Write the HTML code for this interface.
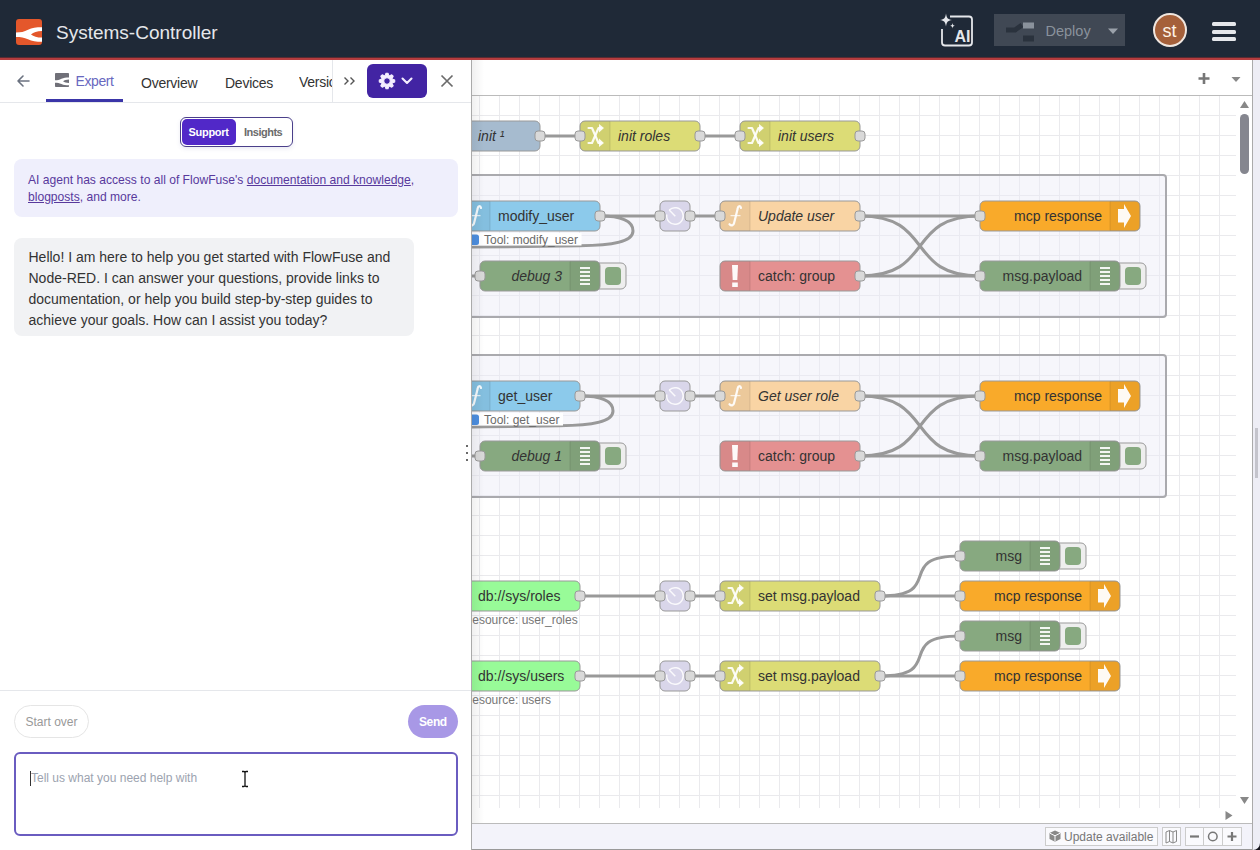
<!DOCTYPE html>
<html><head><meta charset="utf-8">
<style>
*{box-sizing:border-box;margin:0;padding:0}
html,body{width:1260px;height:850px;overflow:hidden;background:#fff;font-family:"Liberation Sans",sans-serif}
.abs{position:absolute}
#hdr{position:absolute;left:0;top:0;width:1260px;height:57px;background:#1f2937}
#redline{position:absolute;left:0;top:57px;width:1260px;height:3px;background:linear-gradient(to bottom,#5a2a31 0,#5a2a31 1px,#b53c3e 1px,#b53c3e 3px)}
#title{position:absolute;left:56px;top:22px;font-size:19px;line-height:22px;color:#e5e7eb;white-space:nowrap}
#panel{position:absolute;left:0;top:60px;width:472px;height:790px;background:#fff;border-right:1px solid #aaa}
#rstrip{position:absolute;left:1252px;top:60px;width:8px;height:790px;background:#ededf5;border-left:1px solid #aaa}
.tab{position:absolute;top:74.5px;font-size:14px;line-height:16px;color:#333;white-space:nowrap;letter-spacing:-0.25px}
.txt{position:absolute;white-space:nowrap}
</style></head>
<body>
<div id="hdr"></div>
<div id="redline"></div>
<!-- logo -->
<svg class="abs" style="left:16px;top:19px" width="26" height="26" viewBox="0 0 26 26">
  <rect x="0" y="0" width="26" height="26" rx="3" fill="#e4572b"/>
  <path d="M0 13.5 C5 13.5 8 13 12 10.8 C16 8.7 20 8.2 26 8.2 L26 12.1 C21 12.1 17.5 13.5 15 15.4 C17.5 17.3 21 18.6 26 18.6 L26 22.8 C20 22.8 16 22.3 12 20.3 C8 18.3 5 17.9 0 17.9 Z" fill="#fff"/>
</svg>
<div id="title">Systems-Controller</div>

<!-- AI icon -->
<svg class="abs" style="left:936px;top:10px" width="40" height="40" viewBox="0 0 40 40">
  <path d="M14 6.5 H33 A3 3 0 0 1 36 9.5 V32.5 A3 3 0 0 1 33 35.5 H9 A3 3 0 0 1 6 32.5 V19" fill="none" stroke="#e5e7eb" stroke-width="1.8"/>
  <path d="M10 3.5 C10.7 8 11.5 9.2 16 10 C11.5 10.8 10.7 12 10 16.5 C9.3 12 8.5 10.8 4 10 C8.5 9.2 9.3 8 10 3.5 Z" fill="#e5e7eb"/>
  <path d="M16.5 13 C16.8 15 17.3 15.5 19 15.8 C17.3 16.1 16.8 16.6 16.5 18.6 C16.2 16.6 15.7 16.1 14 15.8 C15.7 15.5 16.2 15 16.5 13 Z" fill="#e5e7eb"/>
  <text x="18.5" y="32.3" font-family="Liberation Sans" font-weight="bold" font-size="16" fill="#e5e7eb">AI</text>
</svg>

<!-- Deploy button -->
<div class="abs" style="left:994px;top:14px;width:131px;height:32px;background:#404854"></div>
<svg class="abs" style="left:1004px;top:20px" width="32" height="22" viewBox="0 0 32 22">
  <path d="M2 10 L11 10 L18 5" fill="none" stroke="#2a323d" stroke-width="5"/>
  <rect x="19" y="2.5" width="11" height="6" fill="#8a929c"/>
  <rect x="19" y="15.5" width="11" height="6" fill="#2a323d"/>
</svg>
<div class="txt" style="left:1045.5px;top:23px;font-size:14.5px;line-height:16px;color:#8a929c">Deploy</div>
<svg class="abs" style="left:1107px;top:27px" width="12" height="8" viewBox="0 0 12 8"><path d="M1 1.5 L11 1.5 L6 7 Z" fill="#9aa1aa"/></svg>

<!-- avatar -->
<div class="abs" style="left:1153px;top:13px;width:34px;height:34px;border-radius:50%;background:#a5603a;border:2px solid #f0e6df"></div>
<div class="txt" style="left:1162.5px;top:21.5px;font-size:18px;line-height:18px;color:#fff4e8">st</div>
<!-- hamburger -->
<div class="abs" style="left:1212px;top:22px;width:24px;height:4px;border-radius:1.5px;background:#e5e7eb"></div>
<div class="abs" style="left:1212px;top:30px;width:24px;height:4px;border-radius:1.5px;background:#e5e7eb"></div>
<div class="abs" style="left:1212px;top:37px;width:24px;height:4px;border-radius:1.5px;background:#e5e7eb"></div>

<div id="panel"></div>
<!-- panel tab bar -->
<svg class="abs" style="left:15px;top:73px" width="16" height="16" viewBox="0 0 16 16"><path d="M14 8 H3 M8 3 L3 8 L8 13" fill="none" stroke="#6b7280" stroke-width="1.6" stroke-linecap="round" stroke-linejoin="round"/></svg>
<svg class="abs" style="left:55px;top:73px" width="14" height="14" viewBox="0 0 26 26">
  <rect x="0" y="0" width="26" height="26" rx="1.5" fill="#707078"/>
  <path d="M0 13.5 C5 13.5 8 13 12 10.8 C16 8.7 20 8.2 26 8.2 L26 12.1 C21 12.1 17.5 13.5 15 15.4 C17.5 17.3 21 18.6 26 18.6 L26 22.8 C20 22.8 16 22.3 12 20.3 C8 18.3 5 17.9 0 17.9 Z" fill="#fff"/>
</svg>
<div class="tab" style="left:75.5px;top:72.5px;color:#6868c0;letter-spacing:-0.4px">Expert</div>
<div class="abs" style="left:46px;top:99px;width:77px;height:3px;background:#3a35a8"></div>
<div class="tab" style="left:141px">Overview</div>
<div class="tab" style="left:225px">Devices</div>
<div class="abs" style="left:299px;top:60px;width:33px;height:42px;overflow:hidden"><div class="tab" style="left:0;top:14px">Versions</div></div>
<div class="abs" style="left:332px;top:60px;width:1px;height:42px;background:#e5e7eb"></div>
<div class="abs" style="left:0;top:102px;width:471px;height:1px;background:#e5e7eb"></div>
<svg class="abs" style="left:343px;top:76px" width="14" height="10" viewBox="0 0 14 10"><path d="M1.5 1.5 L5 5 L1.5 8.5 M7.5 1.5 L11 5 L7.5 8.5" fill="none" stroke="#555" stroke-width="1.4"/></svg>
<div class="abs" style="left:367px;top:64px;width:60px;height:34px;border-radius:6px;background:#4224a3"></div>
<svg class="abs" style="left:377.5px;top:72px" width="18" height="18" viewBox="0 0 24 24"><path fill="#f5eeff" fill-rule="evenodd" stroke="#f5eeff" stroke-width="1.4" stroke-linejoin="round" d="M9.46 5.26 L10.65 1.69 L13.35 1.69 L14.54 5.26 L14.97 5.44 L18.34 3.75 L20.25 5.66 L18.56 9.03 L18.74 9.46 L22.31 10.65 L22.31 13.35 L18.74 14.54 L18.56 14.97 L20.25 18.34 L18.34 20.25 L14.97 18.56 L14.54 18.74 L13.35 22.31 L10.65 22.31 L9.46 18.74 L9.03 18.56 L5.66 20.25 L3.75 18.34 L5.44 14.97 L5.26 14.54 L1.69 13.35 L1.69 10.65 L5.26 9.46 L5.44 9.03 L3.75 5.66 L5.66 3.75 L9.03 5.44 Z M16.3 12 A4.3 4.3 0 1 0 7.7 12 A4.3 4.3 0 1 0 16.3 12 Z"/></svg>
<svg class="abs" style="left:401px;top:76px" width="12" height="10" viewBox="0 0 12 10"><path d="M1.5 2.5 L6 7 L10.5 2.5" fill="none" stroke="#f5eeff" stroke-width="2.1" stroke-linecap="round" stroke-linejoin="round"/></svg>
<svg class="abs" style="left:440px;top:74px" width="14" height="14" viewBox="0 0 14 14"><path d="M1.5 1.5 L12.5 12.5 M12.5 1.5 L1.5 12.5" fill="none" stroke="#6b6b6b" stroke-width="1.7"/></svg>

<!-- toggle -->
<div class="abs" style="left:180px;top:117px;width:113px;height:30px;border:1.5px solid #4a3f8a;border-radius:6px;background:#fff;box-shadow:0 2px 4px rgba(80,80,160,0.12)"></div>
<div class="abs" style="left:181.5px;top:119px;width:54.5px;height:26px;border-radius:5px;background:#5128c8"></div>
<div class="txt" style="left:188.5px;top:126px;font-size:11px;line-height:13px;font-weight:bold;color:#fff;letter-spacing:-0.3px">Support</div>
<div class="txt" style="left:244px;top:126px;font-size:11px;line-height:13px;font-weight:bold;color:#6b6b6b;letter-spacing:-0.5px">Insights</div>

<!-- info box -->
<div class="abs" style="left:14px;top:159px;width:444px;height:58px;border-radius:8px;background:#efeffc"></div>
<div class="txt" style="left:28px;top:171.8px;font-size:12.1px;line-height:17.6px;color:#58399c;white-space:normal;width:430px">AI agent has access to all of FlowFuse's <u>documentation and knowledge</u>,<br><u>blogposts</u>, and more.</div>

<!-- chat bubble -->
<div class="abs" style="left:14px;top:238px;width:400px;height:98px;border-radius:8px;background:#f1f2f4"></div>
<div class="txt" style="left:28.5px;top:247.2px;font-size:14px;line-height:20.8px;color:#333;white-space:normal;width:380px">Hello! I am here to help you get started with FlowFuse and<br>Node-RED. I can answer your questions, provide links to<br>documentation, or help you build step-by-step guides to<br>achieve your goals. How can I assist you today?</div>

<!-- footer -->
<div class="abs" style="left:0;top:690px;width:471px;height:1px;background:#e5e7eb"></div>
<div class="abs" style="left:14px;top:705px;width:75px;height:33px;border-radius:17px;border:1px solid #e5e5e5;background:#fff"></div>
<div class="txt" style="left:25.5px;top:715px;font-size:12px;line-height:14px;color:#999">Start over</div>
<div class="abs" style="left:408px;top:705px;width:50px;height:33px;border-radius:17px;background:#a898e6"></div>
<div class="txt" style="left:419px;top:715px;font-size:12px;line-height:14px;color:#fff;font-weight:bold;letter-spacing:-0.4px">Send</div>
<div class="abs" style="left:14px;top:752px;width:444px;height:84px;border-radius:6px;border:2px solid #6a5cc0;background:#fff"></div>
<div class="txt" style="left:31px;top:771px;font-size:12px;line-height:14px;color:#9ca3af">Tell us what you need help with</div>
<div class="abs" style="left:30px;top:771px;width:1px;height:15px;background:#333"></div>
<svg class="abs" style="left:240px;top:770px" width="10" height="18" viewBox="0 0 10 18"><path d="M2 1.5 H4 Q5 1.5 5 3 V15 Q5 16.5 4 16.5 H2 M8 1.5 H6 Q5 1.5 5 3 M8 16.5 H6 Q5 16.5 5 15" fill="none" stroke="#111" stroke-width="1.3"/></svg>


<svg id="ws" width="780" height="790" viewBox="0 0 780 790" style="position:absolute;left:472px;top:60px" font-family="Liberation Sans">
<rect x="0" y="0" width="780" height="790" fill="#fff"/>
<g stroke="#eaeaed" stroke-width="1"><line x1="7.5" y1="36" x2="7.5" y2="748" /><line x1="27.5" y1="36" x2="27.5" y2="748" /><line x1="47.5" y1="36" x2="47.5" y2="748" /><line x1="67.5" y1="36" x2="67.5" y2="748" /><line x1="87.5" y1="36" x2="87.5" y2="748" /><line x1="107.5" y1="36" x2="107.5" y2="748" /><line x1="127.5" y1="36" x2="127.5" y2="748" /><line x1="147.5" y1="36" x2="147.5" y2="748" /><line x1="167.5" y1="36" x2="167.5" y2="748" /><line x1="187.5" y1="36" x2="187.5" y2="748" /><line x1="207.5" y1="36" x2="207.5" y2="748" /><line x1="227.5" y1="36" x2="227.5" y2="748" /><line x1="247.5" y1="36" x2="247.5" y2="748" /><line x1="267.5" y1="36" x2="267.5" y2="748" /><line x1="287.5" y1="36" x2="287.5" y2="748" /><line x1="307.5" y1="36" x2="307.5" y2="748" /><line x1="327.5" y1="36" x2="327.5" y2="748" /><line x1="347.5" y1="36" x2="347.5" y2="748" /><line x1="367.5" y1="36" x2="367.5" y2="748" /><line x1="387.5" y1="36" x2="387.5" y2="748" /><line x1="407.5" y1="36" x2="407.5" y2="748" /><line x1="427.5" y1="36" x2="427.5" y2="748" /><line x1="447.5" y1="36" x2="447.5" y2="748" /><line x1="467.5" y1="36" x2="467.5" y2="748" /><line x1="487.5" y1="36" x2="487.5" y2="748" /><line x1="507.5" y1="36" x2="507.5" y2="748" /><line x1="527.5" y1="36" x2="527.5" y2="748" /><line x1="547.5" y1="36" x2="547.5" y2="748" /><line x1="567.5" y1="36" x2="567.5" y2="748" /><line x1="587.5" y1="36" x2="587.5" y2="748" /><line x1="607.5" y1="36" x2="607.5" y2="748" /><line x1="627.5" y1="36" x2="627.5" y2="748" /><line x1="647.5" y1="36" x2="647.5" y2="748" /><line x1="667.5" y1="36" x2="667.5" y2="748" /><line x1="687.5" y1="36" x2="687.5" y2="748" /><line x1="707.5" y1="36" x2="707.5" y2="748" /><line x1="727.5" y1="36" x2="727.5" y2="748" /><line x1="747.5" y1="36" x2="747.5" y2="748" /><line x1="0" y1="55.5" x2="764" y2="55.5" /><line x1="0" y1="75.5" x2="764" y2="75.5" /><line x1="0" y1="95.5" x2="764" y2="95.5" /><line x1="0" y1="115.5" x2="764" y2="115.5" /><line x1="0" y1="135.5" x2="764" y2="135.5" /><line x1="0" y1="155.5" x2="764" y2="155.5" /><line x1="0" y1="175.5" x2="764" y2="175.5" /><line x1="0" y1="195.5" x2="764" y2="195.5" /><line x1="0" y1="215.5" x2="764" y2="215.5" /><line x1="0" y1="235.5" x2="764" y2="235.5" /><line x1="0" y1="255.5" x2="764" y2="255.5" /><line x1="0" y1="275.5" x2="764" y2="275.5" /><line x1="0" y1="295.5" x2="764" y2="295.5" /><line x1="0" y1="315.5" x2="764" y2="315.5" /><line x1="0" y1="335.5" x2="764" y2="335.5" /><line x1="0" y1="355.5" x2="764" y2="355.5" /><line x1="0" y1="375.5" x2="764" y2="375.5" /><line x1="0" y1="395.5" x2="764" y2="395.5" /><line x1="0" y1="415.5" x2="764" y2="415.5" /><line x1="0" y1="435.5" x2="764" y2="435.5" /><line x1="0" y1="455.5" x2="764" y2="455.5" /><line x1="0" y1="475.5" x2="764" y2="475.5" /><line x1="0" y1="495.5" x2="764" y2="495.5" /><line x1="0" y1="515.5" x2="764" y2="515.5" /><line x1="0" y1="535.5" x2="764" y2="535.5" /><line x1="0" y1="555.5" x2="764" y2="555.5" /><line x1="0" y1="575.5" x2="764" y2="575.5" /><line x1="0" y1="595.5" x2="764" y2="595.5" /><line x1="0" y1="615.5" x2="764" y2="615.5" /><line x1="0" y1="635.5" x2="764" y2="635.5" /><line x1="0" y1="655.5" x2="764" y2="655.5" /><line x1="0" y1="675.5" x2="764" y2="675.5" /><line x1="0" y1="695.5" x2="764" y2="695.5" /><line x1="0" y1="715.5" x2="764" y2="715.5" /><line x1="0" y1="735.5" x2="764" y2="735.5" /></g>

<rect x="-32" y="115" width="726" height="142" rx="3" ry="3" fill="#ececf7" fill-opacity="0.45" stroke="#aaaaae" stroke-width="2"/>
<rect x="-32" y="295" width="726" height="142" rx="3" ry="3" fill="#ececf7" fill-opacity="0.45" stroke="#aaaaae" stroke-width="2"/>

<g><path d="M 68 76 C 98.0 76 78.0 76 108 76" fill="none" stroke="#999" stroke-width="3"/><path d="M 228 76 C 258.0 76 238.0 76 268 76" fill="none" stroke="#999" stroke-width="3"/><path d="M 128 156 C 173.0 156 143.0 156 188 156" fill="none" stroke="#999" stroke-width="3"/><path d="M 218 156 C 240.5 156 225.5 156 248 156" fill="none" stroke="#999" stroke-width="3"/><path d="M 388 156 C 463.0 156 433.0 156 508 156" fill="none" stroke="#999" stroke-width="3"/><path d="M 388 156 C 463.0 156 433.0 216 508 216" fill="none" stroke="#999" stroke-width="3"/><path d="M 388 216 C 463.0 216 433.0 156 508 156" fill="none" stroke="#999" stroke-width="3"/><path d="M 388 216 C 463.0 216 433.0 216 508 216" fill="none" stroke="#999" stroke-width="3"/><path d="M -10 216 L 8 216" fill="none" stroke="#999" stroke-width="3"/><path d="M 128 156 C 152 156 161 162 161 171 C 161 182 140 185.5 108 185.8 C 68 186 28 187 -32 187.5" fill="none" stroke="#999" stroke-width="3"/><path d="M 108 336 C 168.0 336 128.0 336 188 336" fill="none" stroke="#999" stroke-width="3"/><path d="M 218 336 C 240.5 336 225.5 336 248 336" fill="none" stroke="#999" stroke-width="3"/><path d="M 388 336 C 463.0 336 433.0 336 508 336" fill="none" stroke="#999" stroke-width="3"/><path d="M 388 336 C 463.0 336 433.0 396 508 396" fill="none" stroke="#999" stroke-width="3"/><path d="M 388 396 C 463.0 396 433.0 336 508 336" fill="none" stroke="#999" stroke-width="3"/><path d="M 388 396 C 463.0 396 433.0 396 508 396" fill="none" stroke="#999" stroke-width="3"/><path d="M -10 396 L 8 396" fill="none" stroke="#999" stroke-width="3"/><path d="M 108 336 C 132 336 141 342 141 351 C 141 362 120 365.5 88 365.8 C 48 366 8 367 -32 367.5" fill="none" stroke="#999" stroke-width="3"/><path d="M 108 536 C 168.0 536 128.0 536 188 536" fill="none" stroke="#999" stroke-width="3"/><path d="M 218 536 C 240.5 536 225.5 536 248 536" fill="none" stroke="#999" stroke-width="3"/><path d="M 408 536 C 475.1 536 420.9 496 488 496" fill="none" stroke="#999" stroke-width="3"/><path d="M 408 536 C 468.0 536 428.0 536 488 536" fill="none" stroke="#999" stroke-width="3"/><path d="M 108 616 C 168.0 616 128.0 616 188 616" fill="none" stroke="#999" stroke-width="3"/><path d="M 218 616 C 240.5 616 225.5 616 248 616" fill="none" stroke="#999" stroke-width="3"/><path d="M 408 616 C 475.1 616 420.9 576 488 576" fill="none" stroke="#999" stroke-width="3"/><path d="M 408 616 C 468.0 616 428.0 616 488 616" fill="none" stroke="#999" stroke-width="3"/></g>
<g><g><rect x="-32" y="61" width="100" height="30" rx="5" ry="5" fill="#a6bbcf" stroke="#999" stroke-width="1"/><text x="6" y="81" font-size="14" fill="#333" font-style="italic">init &#185;</text><rect x="63" y="71.0" width="10" height="10" rx="3" ry="3" fill="#d9d9d9" stroke="#999" stroke-width="1"/></g><g><rect x="108" y="61" width="120" height="30" rx="5" ry="5" fill="#dcdc76" stroke="#999" stroke-width="1"/><path d="M113 61 H138 V91 H113 A5 5 0 0 1 108 86 V66 A5 5 0 0 1 113 61 Z" fill="#000" fill-opacity="0.05"/><path d="M138 61.5 V90.5" stroke="#000" stroke-opacity="0.1" stroke-width="1"/><g fill="none" stroke="#fff" stroke-opacity="0.9" stroke-width="2.2" stroke-linejoin="round" stroke-linecap="round"><path d="M116.5 68.0 L120 68.0 L126.5 83.0 L129 83.0"/><path d="M116.5 83.0  L120 83.0 L126.5 68.0 L129 68.0"/></g><path d="M127 64.0 L132 68.0 L127 72.5 Z M127 78.5 L132 83.0 L127 87.0 Z" fill="#fff" fill-opacity="0.9"/><text x="146" y="81" font-size="14" fill="#333" font-style="italic">init roles</text><rect x="103" y="71.0" width="10" height="10" rx="3" ry="3" fill="#d9d9d9" stroke="#999" stroke-width="1"/><rect x="223" y="71.0" width="10" height="10" rx="3" ry="3" fill="#d9d9d9" stroke="#999" stroke-width="1"/></g><g><rect x="268" y="61" width="120" height="30" rx="5" ry="5" fill="#dcdc76" stroke="#999" stroke-width="1"/><path d="M273 61 H298 V91 H273 A5 5 0 0 1 268 86 V66 A5 5 0 0 1 273 61 Z" fill="#000" fill-opacity="0.05"/><path d="M298 61.5 V90.5" stroke="#000" stroke-opacity="0.1" stroke-width="1"/><g fill="none" stroke="#fff" stroke-opacity="0.9" stroke-width="2.2" stroke-linejoin="round" stroke-linecap="round"><path d="M276.5 68.0 L280 68.0 L286.5 83.0 L289 83.0"/><path d="M276.5 83.0  L280 83.0 L286.5 68.0 L289 68.0"/></g><path d="M287 64.0 L292 68.0 L287 72.5 Z M287 78.5 L292 83.0 L287 87.0 Z" fill="#fff" fill-opacity="0.9"/><text x="306" y="81" font-size="14" fill="#333" font-style="italic">init users</text><rect x="263" y="71.0" width="10" height="10" rx="3" ry="3" fill="#d9d9d9" stroke="#999" stroke-width="1"/><rect x="383" y="71.0" width="10" height="10" rx="3" ry="3" fill="#d9d9d9" stroke="#999" stroke-width="1"/></g><g><rect x="-12" y="141" width="140" height="30" rx="5" ry="5" fill="#8ccaeb" stroke="#999" stroke-width="1"/><path d="M-7 141 H18 V171 H-7 A5 5 0 0 1 -12 166 V146 A5 5 0 0 1 -7 141 Z" fill="#000" fill-opacity="0.05"/><path d="M18 141.5 V170.5" stroke="#000" stroke-opacity="0.1" stroke-width="1"/><path d="M9 148.0 C8.5 145.5 6 145.5 5.6 149.0 L2.1 163.0 C1.6 165.8 -0.7999999999999998 166.0 -2.5 164.2" fill="none" stroke="#fff" stroke-opacity="0.92" stroke-width="2.2" stroke-linecap="round"/><path d="M-1.5 155.6 L8.5 155.6" stroke="#fff" stroke-opacity="0.75" stroke-width="1.3"/><text x="26" y="161" font-size="14" fill="#333">modify_user</text><rect x="-17" y="151.0" width="10" height="10" rx="3" ry="3" fill="#d9d9d9" stroke="#999" stroke-width="1"/><rect x="123" y="151.0" width="10" height="10" rx="3" ry="3" fill="#d9d9d9" stroke="#999" stroke-width="1"/></g><g><rect x="188" y="141" width="30" height="30" rx="5" ry="5" fill="#d9d6ea" stroke="#999" stroke-width="1"/><rect x="183" y="151.0" width="10" height="10" rx="3" ry="3" fill="#d9d9d9" stroke="#999" stroke-width="1"/><rect x="213" y="151.0" width="10" height="10" rx="3" ry="3" fill="#d9d9d9" stroke="#999" stroke-width="1"/></g><g><rect x="248" y="141" width="140" height="30" rx="5" ry="5" fill="#f9d4a4" stroke="#999" stroke-width="1"/><path d="M253 141 H278 V171 H253 A5 5 0 0 1 248 166 V146 A5 5 0 0 1 253 141 Z" fill="#000" fill-opacity="0.05"/><path d="M278 141.5 V170.5" stroke="#000" stroke-opacity="0.1" stroke-width="1"/><path d="M269 148.0 C268.5 145.5 266 145.5 265.6 149.0 L262.1 163.0 C261.6 165.8 259.2 166.0 257.5 164.2" fill="none" stroke="#fff" stroke-opacity="0.92" stroke-width="2.2" stroke-linecap="round"/><path d="M258.5 155.6 L268.5 155.6" stroke="#fff" stroke-opacity="0.75" stroke-width="1.3"/><text x="286" y="161" font-size="14" fill="#333" font-style="italic">Update user</text><rect x="243" y="151.0" width="10" height="10" rx="3" ry="3" fill="#d9d9d9" stroke="#999" stroke-width="1"/><rect x="383" y="151.0" width="10" height="10" rx="3" ry="3" fill="#d9d9d9" stroke="#999" stroke-width="1"/></g><g><rect x="508" y="141" width="160" height="30" rx="5" ry="5" fill="#f9aa2a" stroke="#999" stroke-width="1"/><path d="M638 141 H663 A5 5 0 0 1 668 146 V166 A5 5 0 0 1 663 171 H638 Z" fill="#000" fill-opacity="0.05"/><path d="M638 141.5 V170.5" stroke="#000" stroke-opacity="0.1" stroke-width="1"/><path d="M646 149.0 L652 149.0 L652 144.0 L659 156.0 L652 168.0 L652 162.5 L646 162.5 Z" fill="#fff" fill-opacity="0.95"/><text x="630" y="161" font-size="14" fill="#333" text-anchor="end">mcp response</text><rect x="503" y="151.0" width="10" height="10" rx="3" ry="3" fill="#d9d9d9" stroke="#999" stroke-width="1"/></g><g><rect x="122" y="203" width="32" height="26" rx="5" ry="5" fill="#eee" stroke="#999" stroke-width="1"/><rect x="133" y="207" width="16" height="18" rx="4" ry="4" fill="#87a980" stroke="#999" stroke-width="0" /><rect x="8" y="201" width="120" height="30" rx="5" ry="5" fill="#87a980" stroke="#999" stroke-width="1"/><path d="M98 201 H123 A5 5 0 0 1 128 206 V226 A5 5 0 0 1 123 231 H98 Z" fill="#000" fill-opacity="0.05"/><path d="M98 201.5 V230.5" stroke="#000" stroke-opacity="0.1" stroke-width="1"/><rect x="108" y="207.0" width="10" height="2" fill="#fff" fill-opacity="0.9"/><rect x="108" y="211.0" width="10" height="2" fill="#fff" fill-opacity="0.9"/><rect x="108" y="215.0" width="10" height="2" fill="#fff" fill-opacity="0.9"/><rect x="108" y="219.0" width="10" height="2" fill="#fff" fill-opacity="0.9"/><rect x="108" y="223.0" width="10" height="2" fill="#fff" fill-opacity="0.9"/><text x="90" y="221" font-size="14" fill="#333" text-anchor="end" font-style="italic">debug 3</text><rect x="3" y="211.0" width="10" height="10" rx="3" ry="3" fill="#d9d9d9" stroke="#999" stroke-width="1"/></g><g><rect x="248" y="201" width="140" height="30" rx="5" ry="5" fill="#e49191" stroke="#999" stroke-width="1"/><path d="M253 201 H278 V231 H253 A5 5 0 0 1 248 226 V206 A5 5 0 0 1 253 201 Z" fill="#000" fill-opacity="0.05"/><path d="M278 201.5 V230.5" stroke="#000" stroke-opacity="0.1" stroke-width="1"/><path d="M260 205.0 L266 205.0 L265.3 220.0 L260.7 220.0 Z" fill="#fff" fill-opacity="0.95"/><rect x="260.2" y="222.5" width="5.6" height="4.5" fill="#fff" fill-opacity="0.95"/><text x="286" y="221" font-size="14" fill="#333">catch: group</text><rect x="383" y="211.0" width="10" height="10" rx="3" ry="3" fill="#d9d9d9" stroke="#999" stroke-width="1"/></g><g><rect x="642" y="203" width="32" height="26" rx="5" ry="5" fill="#eee" stroke="#999" stroke-width="1"/><rect x="653" y="207" width="16" height="18" rx="4" ry="4" fill="#87a980" stroke="#999" stroke-width="0" /><rect x="508" y="201" width="140" height="30" rx="5" ry="5" fill="#87a980" stroke="#999" stroke-width="1"/><path d="M618 201 H643 A5 5 0 0 1 648 206 V226 A5 5 0 0 1 643 231 H618 Z" fill="#000" fill-opacity="0.05"/><path d="M618 201.5 V230.5" stroke="#000" stroke-opacity="0.1" stroke-width="1"/><rect x="628" y="207.0" width="10" height="2" fill="#fff" fill-opacity="0.9"/><rect x="628" y="211.0" width="10" height="2" fill="#fff" fill-opacity="0.9"/><rect x="628" y="215.0" width="10" height="2" fill="#fff" fill-opacity="0.9"/><rect x="628" y="219.0" width="10" height="2" fill="#fff" fill-opacity="0.9"/><rect x="628" y="223.0" width="10" height="2" fill="#fff" fill-opacity="0.9"/><text x="610" y="221" font-size="14" fill="#333" text-anchor="end">msg.payload</text><rect x="503" y="211.0" width="10" height="10" rx="3" ry="3" fill="#d9d9d9" stroke="#999" stroke-width="1"/></g><g><rect x="-12" y="321" width="120" height="30" rx="5" ry="5" fill="#8ccaeb" stroke="#999" stroke-width="1"/><path d="M-7 321 H18 V351 H-7 A5 5 0 0 1 -12 346 V326 A5 5 0 0 1 -7 321 Z" fill="#000" fill-opacity="0.05"/><path d="M18 321.5 V350.5" stroke="#000" stroke-opacity="0.1" stroke-width="1"/><path d="M9 328.0 C8.5 325.5 6 325.5 5.6 329.0 L2.1 343.0 C1.6 345.8 -0.7999999999999998 346.0 -2.5 344.2" fill="none" stroke="#fff" stroke-opacity="0.92" stroke-width="2.2" stroke-linecap="round"/><path d="M-1.5 335.6 L8.5 335.6" stroke="#fff" stroke-opacity="0.75" stroke-width="1.3"/><text x="26" y="341" font-size="14" fill="#333">get_user</text><rect x="-17" y="331.0" width="10" height="10" rx="3" ry="3" fill="#d9d9d9" stroke="#999" stroke-width="1"/><rect x="103" y="331.0" width="10" height="10" rx="3" ry="3" fill="#d9d9d9" stroke="#999" stroke-width="1"/></g><g><rect x="188" y="321" width="30" height="30" rx="5" ry="5" fill="#d9d6ea" stroke="#999" stroke-width="1"/><rect x="183" y="331.0" width="10" height="10" rx="3" ry="3" fill="#d9d9d9" stroke="#999" stroke-width="1"/><rect x="213" y="331.0" width="10" height="10" rx="3" ry="3" fill="#d9d9d9" stroke="#999" stroke-width="1"/></g><g><rect x="248" y="321" width="140" height="30" rx="5" ry="5" fill="#f9d4a4" stroke="#999" stroke-width="1"/><path d="M253 321 H278 V351 H253 A5 5 0 0 1 248 346 V326 A5 5 0 0 1 253 321 Z" fill="#000" fill-opacity="0.05"/><path d="M278 321.5 V350.5" stroke="#000" stroke-opacity="0.1" stroke-width="1"/><path d="M269 328.0 C268.5 325.5 266 325.5 265.6 329.0 L262.1 343.0 C261.6 345.8 259.2 346.0 257.5 344.2" fill="none" stroke="#fff" stroke-opacity="0.92" stroke-width="2.2" stroke-linecap="round"/><path d="M258.5 335.6 L268.5 335.6" stroke="#fff" stroke-opacity="0.75" stroke-width="1.3"/><text x="286" y="341" font-size="14" fill="#333" font-style="italic">Get user role</text><rect x="243" y="331.0" width="10" height="10" rx="3" ry="3" fill="#d9d9d9" stroke="#999" stroke-width="1"/><rect x="383" y="331.0" width="10" height="10" rx="3" ry="3" fill="#d9d9d9" stroke="#999" stroke-width="1"/></g><g><rect x="508" y="321" width="160" height="30" rx="5" ry="5" fill="#f9aa2a" stroke="#999" stroke-width="1"/><path d="M638 321 H663 A5 5 0 0 1 668 326 V346 A5 5 0 0 1 663 351 H638 Z" fill="#000" fill-opacity="0.05"/><path d="M638 321.5 V350.5" stroke="#000" stroke-opacity="0.1" stroke-width="1"/><path d="M646 329.0 L652 329.0 L652 324.0 L659 336.0 L652 348.0 L652 342.5 L646 342.5 Z" fill="#fff" fill-opacity="0.95"/><text x="630" y="341" font-size="14" fill="#333" text-anchor="end">mcp response</text><rect x="503" y="331.0" width="10" height="10" rx="3" ry="3" fill="#d9d9d9" stroke="#999" stroke-width="1"/></g><g><rect x="122" y="383" width="32" height="26" rx="5" ry="5" fill="#eee" stroke="#999" stroke-width="1"/><rect x="133" y="387" width="16" height="18" rx="4" ry="4" fill="#87a980" stroke="#999" stroke-width="0" /><rect x="8" y="381" width="120" height="30" rx="5" ry="5" fill="#87a980" stroke="#999" stroke-width="1"/><path d="M98 381 H123 A5 5 0 0 1 128 386 V406 A5 5 0 0 1 123 411 H98 Z" fill="#000" fill-opacity="0.05"/><path d="M98 381.5 V410.5" stroke="#000" stroke-opacity="0.1" stroke-width="1"/><rect x="108" y="387.0" width="10" height="2" fill="#fff" fill-opacity="0.9"/><rect x="108" y="391.0" width="10" height="2" fill="#fff" fill-opacity="0.9"/><rect x="108" y="395.0" width="10" height="2" fill="#fff" fill-opacity="0.9"/><rect x="108" y="399.0" width="10" height="2" fill="#fff" fill-opacity="0.9"/><rect x="108" y="403.0" width="10" height="2" fill="#fff" fill-opacity="0.9"/><text x="90" y="401" font-size="14" fill="#333" text-anchor="end" font-style="italic">debug 1</text><rect x="3" y="391.0" width="10" height="10" rx="3" ry="3" fill="#d9d9d9" stroke="#999" stroke-width="1"/></g><g><rect x="248" y="381" width="140" height="30" rx="5" ry="5" fill="#e49191" stroke="#999" stroke-width="1"/><path d="M253 381 H278 V411 H253 A5 5 0 0 1 248 406 V386 A5 5 0 0 1 253 381 Z" fill="#000" fill-opacity="0.05"/><path d="M278 381.5 V410.5" stroke="#000" stroke-opacity="0.1" stroke-width="1"/><path d="M260 385.0 L266 385.0 L265.3 400.0 L260.7 400.0 Z" fill="#fff" fill-opacity="0.95"/><rect x="260.2" y="402.5" width="5.6" height="4.5" fill="#fff" fill-opacity="0.95"/><text x="286" y="401" font-size="14" fill="#333">catch: group</text><rect x="383" y="391.0" width="10" height="10" rx="3" ry="3" fill="#d9d9d9" stroke="#999" stroke-width="1"/></g><g><rect x="642" y="383" width="32" height="26" rx="5" ry="5" fill="#eee" stroke="#999" stroke-width="1"/><rect x="653" y="387" width="16" height="18" rx="4" ry="4" fill="#87a980" stroke="#999" stroke-width="0" /><rect x="508" y="381" width="140" height="30" rx="5" ry="5" fill="#87a980" stroke="#999" stroke-width="1"/><path d="M618 381 H643 A5 5 0 0 1 648 386 V406 A5 5 0 0 1 643 411 H618 Z" fill="#000" fill-opacity="0.05"/><path d="M618 381.5 V410.5" stroke="#000" stroke-opacity="0.1" stroke-width="1"/><rect x="628" y="387.0" width="10" height="2" fill="#fff" fill-opacity="0.9"/><rect x="628" y="391.0" width="10" height="2" fill="#fff" fill-opacity="0.9"/><rect x="628" y="395.0" width="10" height="2" fill="#fff" fill-opacity="0.9"/><rect x="628" y="399.0" width="10" height="2" fill="#fff" fill-opacity="0.9"/><rect x="628" y="403.0" width="10" height="2" fill="#fff" fill-opacity="0.9"/><text x="610" y="401" font-size="14" fill="#333" text-anchor="end">msg.payload</text><rect x="503" y="391.0" width="10" height="10" rx="3" ry="3" fill="#d9d9d9" stroke="#999" stroke-width="1"/></g><g><rect x="-32" y="521" width="140" height="30" rx="5" ry="5" fill="#98fb98" stroke="#999" stroke-width="1"/><path d="M-27 521 H-2 V551 H-27 A5 5 0 0 1 -32 546 V526 A5 5 0 0 1 -27 521 Z" fill="#000" fill-opacity="0.05"/><path d="M-2 521.5 V550.5" stroke="#000" stroke-opacity="0.1" stroke-width="1"/><path d="M-11 528.0 C-11.5 525.5 -14 525.5 -14.4 529.0 L-17.9 543.0 C-18.4 545.8 -20.8 546.0 -22.5 544.2" fill="none" stroke="#fff" stroke-opacity="0.92" stroke-width="2.2" stroke-linecap="round"/><path d="M-21.5 535.6 L-11.5 535.6" stroke="#fff" stroke-opacity="0.75" stroke-width="1.3"/><text x="6" y="541" font-size="14" fill="#333">db://sys/roles</text><rect x="-37" y="531.0" width="10" height="10" rx="3" ry="3" fill="#d9d9d9" stroke="#999" stroke-width="1"/><rect x="103" y="531.0" width="10" height="10" rx="3" ry="3" fill="#d9d9d9" stroke="#999" stroke-width="1"/></g><g><rect x="188" y="521" width="30" height="30" rx="5" ry="5" fill="#d9d6ea" stroke="#999" stroke-width="1"/><rect x="183" y="531.0" width="10" height="10" rx="3" ry="3" fill="#d9d9d9" stroke="#999" stroke-width="1"/><rect x="213" y="531.0" width="10" height="10" rx="3" ry="3" fill="#d9d9d9" stroke="#999" stroke-width="1"/></g><g><rect x="248" y="521" width="160" height="30" rx="5" ry="5" fill="#dcdc76" stroke="#999" stroke-width="1"/><path d="M253 521 H278 V551 H253 A5 5 0 0 1 248 546 V526 A5 5 0 0 1 253 521 Z" fill="#000" fill-opacity="0.05"/><path d="M278 521.5 V550.5" stroke="#000" stroke-opacity="0.1" stroke-width="1"/><g fill="none" stroke="#fff" stroke-opacity="0.9" stroke-width="2.2" stroke-linejoin="round" stroke-linecap="round"><path d="M256.5 528.0 L260 528.0 L266.5 543.0 L269 543.0"/><path d="M256.5 543.0  L260 543.0 L266.5 528.0 L269 528.0"/></g><path d="M267 524.0 L272 528.0 L267 532.5 Z M267 538.5 L272 543.0 L267 547.0 Z" fill="#fff" fill-opacity="0.9"/><text x="286" y="541" font-size="14" fill="#333">set msg.payload</text><rect x="243" y="531.0" width="10" height="10" rx="3" ry="3" fill="#d9d9d9" stroke="#999" stroke-width="1"/><rect x="403" y="531.0" width="10" height="10" rx="3" ry="3" fill="#d9d9d9" stroke="#999" stroke-width="1"/></g><g><rect x="582" y="483" width="32" height="26" rx="5" ry="5" fill="#eee" stroke="#999" stroke-width="1"/><rect x="593" y="487" width="16" height="18" rx="4" ry="4" fill="#87a980" stroke="#999" stroke-width="0" /><rect x="488" y="481" width="100" height="30" rx="5" ry="5" fill="#87a980" stroke="#999" stroke-width="1"/><path d="M558 481 H583 A5 5 0 0 1 588 486 V506 A5 5 0 0 1 583 511 H558 Z" fill="#000" fill-opacity="0.05"/><path d="M558 481.5 V510.5" stroke="#000" stroke-opacity="0.1" stroke-width="1"/><rect x="568" y="487.0" width="10" height="2" fill="#fff" fill-opacity="0.9"/><rect x="568" y="491.0" width="10" height="2" fill="#fff" fill-opacity="0.9"/><rect x="568" y="495.0" width="10" height="2" fill="#fff" fill-opacity="0.9"/><rect x="568" y="499.0" width="10" height="2" fill="#fff" fill-opacity="0.9"/><rect x="568" y="503.0" width="10" height="2" fill="#fff" fill-opacity="0.9"/><text x="550" y="501" font-size="14" fill="#333" text-anchor="end">msg</text><rect x="483" y="491.0" width="10" height="10" rx="3" ry="3" fill="#d9d9d9" stroke="#999" stroke-width="1"/></g><g><rect x="488" y="521" width="160" height="30" rx="5" ry="5" fill="#f9aa2a" stroke="#999" stroke-width="1"/><path d="M618 521 H643 A5 5 0 0 1 648 526 V546 A5 5 0 0 1 643 551 H618 Z" fill="#000" fill-opacity="0.05"/><path d="M618 521.5 V550.5" stroke="#000" stroke-opacity="0.1" stroke-width="1"/><path d="M626 529.0 L632 529.0 L632 524.0 L639 536.0 L632 548.0 L632 542.5 L626 542.5 Z" fill="#fff" fill-opacity="0.95"/><text x="610" y="541" font-size="14" fill="#333" text-anchor="end">mcp response</text><rect x="483" y="531.0" width="10" height="10" rx="3" ry="3" fill="#d9d9d9" stroke="#999" stroke-width="1"/></g><g><rect x="-32" y="601" width="140" height="30" rx="5" ry="5" fill="#98fb98" stroke="#999" stroke-width="1"/><path d="M-27 601 H-2 V631 H-27 A5 5 0 0 1 -32 626 V606 A5 5 0 0 1 -27 601 Z" fill="#000" fill-opacity="0.05"/><path d="M-2 601.5 V630.5" stroke="#000" stroke-opacity="0.1" stroke-width="1"/><path d="M-11 608.0 C-11.5 605.5 -14 605.5 -14.4 609.0 L-17.9 623.0 C-18.4 625.8 -20.8 626.0 -22.5 624.2" fill="none" stroke="#fff" stroke-opacity="0.92" stroke-width="2.2" stroke-linecap="round"/><path d="M-21.5 615.6 L-11.5 615.6" stroke="#fff" stroke-opacity="0.75" stroke-width="1.3"/><text x="6" y="621" font-size="14" fill="#333">db://sys/users</text><rect x="-37" y="611.0" width="10" height="10" rx="3" ry="3" fill="#d9d9d9" stroke="#999" stroke-width="1"/><rect x="103" y="611.0" width="10" height="10" rx="3" ry="3" fill="#d9d9d9" stroke="#999" stroke-width="1"/></g><g><rect x="188" y="601" width="30" height="30" rx="5" ry="5" fill="#d9d6ea" stroke="#999" stroke-width="1"/><rect x="183" y="611.0" width="10" height="10" rx="3" ry="3" fill="#d9d9d9" stroke="#999" stroke-width="1"/><rect x="213" y="611.0" width="10" height="10" rx="3" ry="3" fill="#d9d9d9" stroke="#999" stroke-width="1"/></g><g><rect x="248" y="601" width="160" height="30" rx="5" ry="5" fill="#dcdc76" stroke="#999" stroke-width="1"/><path d="M253 601 H278 V631 H253 A5 5 0 0 1 248 626 V606 A5 5 0 0 1 253 601 Z" fill="#000" fill-opacity="0.05"/><path d="M278 601.5 V630.5" stroke="#000" stroke-opacity="0.1" stroke-width="1"/><g fill="none" stroke="#fff" stroke-opacity="0.9" stroke-width="2.2" stroke-linejoin="round" stroke-linecap="round"><path d="M256.5 608.0 L260 608.0 L266.5 623.0 L269 623.0"/><path d="M256.5 623.0  L260 623.0 L266.5 608.0 L269 608.0"/></g><path d="M267 604.0 L272 608.0 L267 612.5 Z M267 618.5 L272 623.0 L267 627.0 Z" fill="#fff" fill-opacity="0.9"/><text x="286" y="621" font-size="14" fill="#333">set msg.payload</text><rect x="243" y="611.0" width="10" height="10" rx="3" ry="3" fill="#d9d9d9" stroke="#999" stroke-width="1"/><rect x="403" y="611.0" width="10" height="10" rx="3" ry="3" fill="#d9d9d9" stroke="#999" stroke-width="1"/></g><g><rect x="582" y="563" width="32" height="26" rx="5" ry="5" fill="#eee" stroke="#999" stroke-width="1"/><rect x="593" y="567" width="16" height="18" rx="4" ry="4" fill="#87a980" stroke="#999" stroke-width="0" /><rect x="488" y="561" width="100" height="30" rx="5" ry="5" fill="#87a980" stroke="#999" stroke-width="1"/><path d="M558 561 H583 A5 5 0 0 1 588 566 V586 A5 5 0 0 1 583 591 H558 Z" fill="#000" fill-opacity="0.05"/><path d="M558 561.5 V590.5" stroke="#000" stroke-opacity="0.1" stroke-width="1"/><rect x="568" y="567.0" width="10" height="2" fill="#fff" fill-opacity="0.9"/><rect x="568" y="571.0" width="10" height="2" fill="#fff" fill-opacity="0.9"/><rect x="568" y="575.0" width="10" height="2" fill="#fff" fill-opacity="0.9"/><rect x="568" y="579.0" width="10" height="2" fill="#fff" fill-opacity="0.9"/><rect x="568" y="583.0" width="10" height="2" fill="#fff" fill-opacity="0.9"/><text x="550" y="581" font-size="14" fill="#333" text-anchor="end">msg</text><rect x="483" y="571.0" width="10" height="10" rx="3" ry="3" fill="#d9d9d9" stroke="#999" stroke-width="1"/></g><g><rect x="488" y="601" width="160" height="30" rx="5" ry="5" fill="#f9aa2a" stroke="#999" stroke-width="1"/><path d="M618 601 H643 A5 5 0 0 1 648 606 V626 A5 5 0 0 1 643 631 H618 Z" fill="#000" fill-opacity="0.05"/><path d="M618 601.5 V630.5" stroke="#000" stroke-opacity="0.1" stroke-width="1"/><path d="M626 609.0 L632 609.0 L632 604.0 L639 616.0 L632 628.0 L632 622.5 L626 622.5 Z" fill="#fff" fill-opacity="0.95"/><text x="610" y="621" font-size="14" fill="#333" text-anchor="end">mcp response</text><rect x="483" y="611.0" width="10" height="10" rx="3" ry="3" fill="#d9d9d9" stroke="#999" stroke-width="1"/></g></g>
<g fill="none" stroke="#fff" stroke-opacity="0.85" stroke-width="1.5"><path d="M194.8 154.5 A8.3 8.3 0 1 0 197.2 150"/><path d="M197.2 150 L203.3 156.3"/></g><g fill="none" stroke="#fff" stroke-opacity="0.85" stroke-width="1.5"><path d="M194.8 334.5 A8.3 8.3 0 1 0 197.2 330"/><path d="M197.2 330 L203.3 336.3"/></g><g fill="none" stroke="#fff" stroke-opacity="0.85" stroke-width="1.5"><path d="M194.8 534.5 A8.3 8.3 0 1 0 197.2 530"/><path d="M197.2 530 L203.3 536.3"/></g><g fill="none" stroke="#fff" stroke-opacity="0.85" stroke-width="1.5"><path d="M194.8 614.5 A8.3 8.3 0 1 0 197.2 610"/><path d="M197.2 610 L203.3 616.3"/></g>
<rect x="0" y="173" width="109.5" height="12.5" fill="#fff"/><rect x="-4" y="174.5" width="11" height="10.5" rx="2.5" fill="#4d8fe0"/><text x="12" y="183.6" font-size="12" fill="#6a6a6a">Tool: modify_user</text><rect x="0" y="353" width="91.0" height="12.5" fill="#fff"/><rect x="-4" y="354.5" width="11" height="10.5" rx="2.5" fill="#4d8fe0"/><text x="12" y="363.6" font-size="12" fill="#6a6a6a">Tool: get_user</text><text x="-8.399999999999977" y="563.6" font-size="12" fill="#777">Resource: user_roles</text><text x="-8.399999999999977" y="643.6" font-size="12" fill="#777">Resource: users</text>
<!-- tab bar -->
<rect x="0" y="0" width="780" height="35.5" fill="#fff"/>
<line x1="0" y1="35.5" x2="780" y2="35.5" stroke="#bbb" stroke-width="1"/>
<path d="M732 13 V24 M726.5 18.5 H737.5" stroke="#777" stroke-width="2.6"/>
<path d="M759.5 17 L768.5 17 L764 22 Z" fill="#888"/>
<!-- scrollbars -->
<rect x="764" y="36" width="16" height="727" fill="#fff"/>
<rect x="0" y="748" width="764" height="15" fill="#fff"/>
<path d="M768 48 L777 48 L772.5 41 Z" fill="#888"/>
<rect x="768" y="54" width="9" height="60" rx="4.5" fill="#85868f"/>
<path d="M768 737 L777 737 L772.5 744 Z" fill="#888"/>
<path d="M753.5 751 L753.5 760 L760.5 755.5 Z" fill="#888"/>
<!-- footer -->
<rect x="0" y="763" width="780" height="27" fill="#f3f3fa"/>
<line x1="0" y1="763.5" x2="780" y2="763.5" stroke="#bbb" stroke-width="1"/>
<line x1="0" y1="789.5" x2="780" y2="789.5" stroke="#999" stroke-width="1"/>
<rect x="573.5" y="767.5" width="112" height="18" fill="#fafafd" stroke="#ccc" stroke-width="1"/>
<g transform="translate(577,770)">
  <path d="M6 0.5 L11.5 3 L11.5 9 L6 11.8 L0.5 9 L0.5 3 Z" fill="#888"/>
  <path d="M0.8 3.2 L6 5.8 L11.2 3.2 M6 5.8 V11.5" fill="none" stroke="#fafafd" stroke-width="1"/>
</g>
<text x="592" y="781" font-size="12" fill="#777">Update available</text>
<rect x="690.5" y="767.5" width="18" height="18" fill="#fafafd" stroke="#ccc" stroke-width="1"/>
<path d="M694 772 L697.5 770.5 L701 772 L704.5 770.5 L704.5 781.5 L701 783 L697.5 781.5 L694 783 Z M697.5 770.5 V781.5 M701 772 V783" fill="none" stroke="#888" stroke-width="1"/>
<rect x="713.5" y="767.5" width="56" height="18" fill="#fafafd" stroke="#ccc" stroke-width="1"/>
<line x1="731.5" y1="767.5" x2="731.5" y2="785.5" stroke="#ccc"/>
<line x1="750.5" y1="767.5" x2="750.5" y2="785.5" stroke="#ccc"/>
<path d="M718 776.5 H727" stroke="#777" stroke-width="2.2"/>
<circle cx="740.8" cy="776.5" r="4.3" fill="none" stroke="#777" stroke-width="1.5"/>
<path d="M755.5 776.5 H764.5 M760 772 V781" stroke="#777" stroke-width="2.2"/>
</svg>

<div id="rstrip"></div>
<div class="abs" style="left:1255px;top:428px;width:3px;height:50px;background:#c4c4cc"></div>
<div class="abs" style="left:466px;top:445px;width:2px;height:1.5px;background:#6a6a6a"></div>
<div class="abs" style="left:466px;top:452px;width:2px;height:1.5px;background:#6a6a6a"></div>
<div class="abs" style="left:466px;top:459px;width:2px;height:1.5px;background:#6a6a6a"></div>
<svg class="abs" style="left:1250px;top:840px" width="10" height="10" viewBox="0 0 10 10"><path d="M10 3 A7 7 0 0 1 3 10 L10 10 Z" fill="#15151c"/></svg>
<div class="abs" style="left:472px;top:60px;width:12px;height:763px;background:linear-gradient(to right, rgba(0,0,0,0.06), rgba(0,0,0,0))"></div>
</body></html>
